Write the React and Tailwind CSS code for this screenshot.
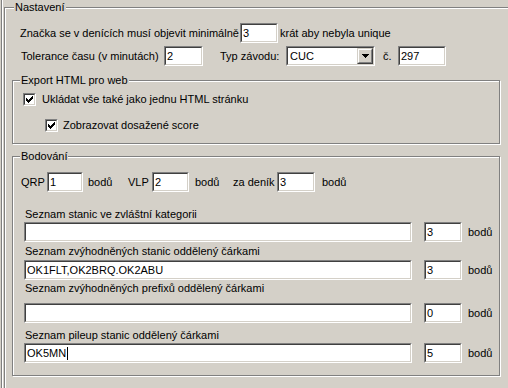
import React from "react";

function Sunken({ className = "", children, caret }) {
  return (
    <div className={`shrink-0 border border-t-[#808080] border-l-[#808080] border-b-white border-r-white ${className}`}>
      <div className="h-full border border-t-[#404040] border-l-[#404040] border-b-[#d4d0c8] border-r-[#d4d0c8] bg-white flex items-center pl-[1px]">
        {children !== undefined && <span className="whitespace-pre">{children}</span>}
        {caret && <span className="w-px h-[13px] bg-black ml-[1px]" />}
      </div>
    </div>
  );
}

function Check() {
  return (
    <div className="shrink-0 w-[13px] h-[13px] border border-t-[#808080] border-l-[#808080] border-b-white border-r-white">
      <div className="h-full border border-t-[#404040] border-l-[#404040] border-b-[#d4d0c8] border-r-[#d4d0c8] bg-white flex items-center justify-center">
        <svg width="7" height="7" viewBox="0 0 7 7" shapeRendering="crispEdges">
          <path
            fill="#000"
            d="M6 0h1v1h-1z M5 1h2v1h-2z M0 2h1v1h-1z M4 2h3v1h-3z M0 3h2v1h-2z M3 3h3v1h-3z M0 4h5v1h-5z M1 5h3v1h-3z M2 6h1v1h-1z"
          />
        </svg>
      </div>
    </div>
  );
}

function Select({ className = "", value }) {
  return (
    <div className={`shrink-0 border border-t-[#808080] border-l-[#808080] border-b-white border-r-white ${className}`}>
      <div className="h-full border border-t-[#404040] border-l-[#404040] border-b-[#d4d0c8] border-r-[#d4d0c8] bg-white flex items-center pl-[2px]">
        <span className="flex-1">{value}</span>
        <div className="w-[16px] h-[16px] border border-t-[#d4d0c8] border-l-[#d4d0c8] border-b-[#404040] border-r-[#404040]">
          <div className="h-full border border-t-white border-l-white border-b-[#808080] border-r-[#808080] bg-[#d4d0c8] flex items-center justify-center">
            <svg width="7" height="4" viewBox="0 0 7 4" shapeRendering="crispEdges">
              <path fill="#000" d="M0 0h7v1h-7z M1 1h5v1h-5z M2 2h3v1h-3z M3 3h1v1h-1z" />
            </svg>
          </div>
        </div>
      </div>
    </div>
  );
}

function GroupBox({ label, labelLeft = "", className = "", children }) {
  return (
    <div className={`relative shrink-0 border border-[#808080] shadow-[inset_1px_1px_0_#fff,1px_1px_0_#fff] ${className}`}>
      <span className={`absolute top-[-7px] bg-[#d4d0c8] px-[1px] whitespace-nowrap ${labelLeft}`}>{label}</span>
      {children}
    </div>
  );
}

function ListRow({ label, value, points, caret, labelMt, inputMt }) {
  return (
    <>
      <div className={`pl-[12px] ${labelMt}`}>{label}</div>
      <div className={`flex items-center pl-[11px] ${inputMt}`}>
        <Sunken className="w-[388px] h-[20px]" caret={caret}>{value}</Sunken>
        <Sunken className="w-[38px] h-[20px] ml-[12px]">{points}</Sunken>
        <span className="ml-[6px]">bodů</span>
      </div>
    </>
  );
}

export default function App() {
  return (
    <div className="w-[508px] h-[388px] overflow-hidden bg-[#d4d0c8] text-[11px] leading-[13px] text-black font-['Liberation_Sans',Arial,sans-serif] pl-[1px]">
      <div className="h-full border-l border-l-[#808080] shadow-[inset_1px_0_0_#fff] pl-[2px] pt-[7px]">
        <GroupBox label="Nastavení" labelLeft="left-[9px]" className="w-[530px] h-[420px] pl-[7px] pt-[15px] flex flex-col">
          <div className="flex items-center h-[20px] pl-[8px]">
            <span className="w-[220px] shrink-0 whitespace-nowrap">Značka se v denících musí objevit minimálně</span>
            <Sunken className="w-[38px] h-[20px]">3</Sunken>
            <span className="ml-[2px] whitespace-nowrap">krát aby nebyla unique</span>
          </div>
          <div className="flex items-center h-[20px] mt-[3px] pl-[8px]">
            <span className="w-[144px] shrink-0 whitespace-nowrap pl-[1px]">Tolerance času (v minutách)</span>
            <Sunken className="w-[39px] h-[20px]">2</Sunken>
            <span className="ml-[17px] w-[66px] shrink-0 whitespace-nowrap">Typ závodu:</span>
            <Select className="w-[89px] h-[20px]" value="CUC" />
            <span className="ml-[8px] w-[15px] shrink-0">č.</span>
            <Sunken className="w-[48px] h-[20px]">297</Sunken>
          </div>

          <GroupBox label="Export HTML pro web" labelLeft="left-[7px]" className="mt-[14px] w-[488px] h-[64px] pl-[10px] pt-[12px]">
            <div className="flex items-center">
              <Check />
              <span className="ml-[6px]">Ukládat vše také jako jednu HTML stránku</span>
            </div>
            <div className="flex items-center mt-[13px] pl-[22px]">
              <Check />
              <span className="ml-[5px]">Zobrazovat dosažené score</span>
            </div>
          </GroupBox>

          <GroupBox label="Bodování" labelLeft="left-[7px]" className="mt-[12px] w-[488px] h-[220px] pt-[15px] flex flex-col">
            <div className="flex items-center h-[20px] pl-[8px]">
              <span className="w-[26px] shrink-0">QRP</span>
              <Sunken className="w-[36px] h-[20px]">1</Sunken>
              <span className="ml-[5px] w-[40px] shrink-0">bodů</span>
              <span className="w-[24px] shrink-0">VLP</span>
              <Sunken className="w-[37px] h-[20px]">2</Sunken>
              <span className="ml-[6px] w-[38px] shrink-0">bodů</span>
              <span className="w-[44px] shrink-0 whitespace-nowrap">za deník</span>
              <Sunken className="w-[38px] h-[20px]">3</Sunken>
              <span className="ml-[7px]">bodů</span>
            </div>
            <ListRow label="Seznam stanic ve zvláštní kategorii" value="" points="3" labelMt="mt-[16px]" inputMt="mt-[1px]" />
            <ListRow label="Seznam zvýhodněných stanic oddělený čárkami" value="OK1FLT,OK2BRQ.OK2ABU" points="3" labelMt="mt-[3px]" inputMt="mt-[2px]" />
            <ListRow label="Seznam zvýhodněných prefixů oddělený čárkami" value="" points="0" labelMt="mt-[2px]" inputMt="mt-[8px]" />
            <ListRow label="Seznam pileup stanic oddělený čárkami" value="OK5MN" caret points="5" labelMt="mt-[6px]" inputMt="mt-[1px]" />
          </GroupBox>
        </GroupBox>
      </div>
    </div>
  );
}
